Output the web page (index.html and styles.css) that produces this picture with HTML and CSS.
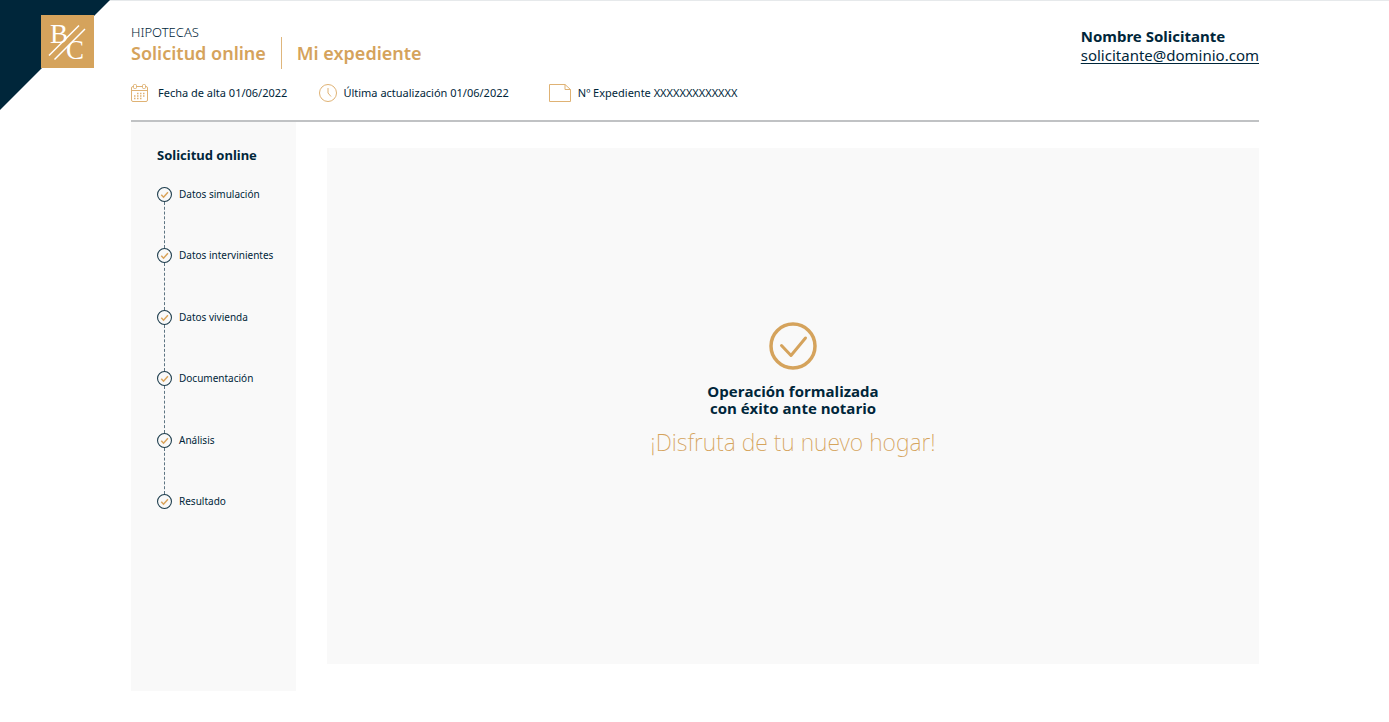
FILE: index.html
```html
<!DOCTYPE html>
<html lang="es">
<head>
<meta charset="utf-8">
<meta name="viewport" content="width=device-width, initial-scale=1">
<title>Mi expediente</title>
<link rel="stylesheet" href="styles.css">
</head>
<body>
<svg class="symbols" aria-hidden="true">
  <symbol id="check" viewBox="0 0 14 14">
    <circle cx="7" cy="7" r="6.5" fill="none" stroke="#1c3c4c"/>
    <path d="M4 7.3 6.1 9.5 10.2 4.9" fill="none" stroke="#d9a35b" stroke-width="1.4"/>
  </symbol>
</svg>
<div class="corner">
  <svg class="logo" viewBox="0 0 53 53" role="img" aria-label="B/C">
    <rect width="53" height="53" fill="#d5a35c"/>
    <text class="logo-letter" x="9" y="28">B</text>
    <text class="logo-letter" x="25" y="44">C</text>
    <path d="M11 42.500 42 12" stroke="#d5a35c" stroke-width="5"/>
    <path d="M8 40.500 38 10.500M13.500 44.500 44 14" stroke="#fff" stroke-width="1.500"/>
  </svg>
</div>
<div class="page">
  <header class="header">
    <div class="top">
      <div>
        <p class="section">HIPOTECAS</p>
        <div class="titles">
          <h1 class="title">Solicitud online</h1>
          <h2 class="title title-second">Mi expediente</h2>
        </div>
      </div>
      <div class="user">
        <p class="user-name">Nombre Solicitante</p>
        <a class="user-mail" href="mailto:solicitante@dominio.com">solicitante@dominio.com</a>
      </div>
    </div>
    <ul class="facts">
      <li class="fact fact-date">
        <svg width="17" height="18" viewBox="0 0 17 18" fill="none" stroke="#dfb274" aria-hidden="true">
          <path d="M2.500 2.500H2Q.5 2.500.5 4V16Q.5 17.500 2 17.500H15Q16.500 17.500 16.500 16V4Q16.500 2.500 15 2.500H14.500M5.500 2.500H11.500M.5 6.500H16.500"/>
          <rect x="2.500" y=".5" width="3" height="4" rx="1"/>
          <rect x="11.500" y=".5" width="3" height="4" rx="1"/>
          <path d="M6 9.500H15M3 12H15M3 14.500H12" stroke-width="1.500" stroke-dasharray="1.500 1.500"/>
        </svg>
        Fecha de alta 01/06/2022
      </li>
      <li class="fact fact-update">
        <svg width="18" height="18" viewBox="0 0 18 18" fill="none" stroke="#dfb274" aria-hidden="true">
          <circle cx="9" cy="9" r="8.500"/>
          <path d="M9 4V9L12 12.500"/>
        </svg>
        Última actualización 01/06/2022
      </li>
      <li class="fact fact-file">
        <svg width="22" height="18" viewBox="0 0 22 18" fill="none" stroke="#dfb274" aria-hidden="true">
          <path d="M.5.5H16L21.500 5.500V17.500H.5ZM16 .5V5.500H21.500"/>
        </svg>
        Nº Expediente XXXXXXXXXXXXX
      </li>
    </ul>
  </header>
  <div class="body">
    <nav class="sidebar" aria-labelledby="steps-title">
      <h2 class="steps-title" id="steps-title">Solicitud online</h2>
      <ol class="steps">
        <li class="step"><span class="rail"><svg class="mark"><use href="#check"/></svg></span>Datos simulación</li>
        <li class="step"><span class="rail"><svg class="mark"><use href="#check"/></svg></span>Datos intervinientes</li>
        <li class="step"><span class="rail"><svg class="mark"><use href="#check"/></svg></span>Datos vivienda</li>
        <li class="step"><span class="rail"><svg class="mark"><use href="#check"/></svg></span>Documentación</li>
        <li class="step"><span class="rail"><svg class="mark"><use href="#check"/></svg></span>Análisis</li>
        <li class="step"><span class="rail"><svg class="mark"><use href="#check"/></svg></span>Resultado</li>
      </ol>
    </nav>
    <main class="panel">
      <svg width="48" height="48" viewBox="0 0 48 48" fill="none" stroke="#d5a35c" aria-hidden="true">
        <circle cx="24" cy="24" r="22" stroke-width="3.500"/>
        <path d="M12.500 23.500 22 33.500 36.500 16" stroke-width="3" stroke-linecap="round" stroke-linejoin="round"/>
      </svg>
      <p class="message">Operación formalizada<br>con éxito ante notario</p>
      <p class="wish">¡Disfruta de tu nuevo hogar!</p>
    </main>
  </div>
</div>
</body>
</html>
```
FILE: styles.css
```css
* { box-sizing: border-box; margin: 0; padding: 0; }

body {
  background: #fff;
  color: #00263a;
  font-family: "Noto Sans", "Open Sans", sans-serif;
}

ul, ol { list-style: none; }
.symbols { position: absolute; width: 0; height: 0; }

.corner {
  position: absolute;
  top: 0;
  left: 0;
  padding: 15px 0 0 41px;
  width: 110px;
  height: 110px;
  background: #00263a;
  clip-path: polygon(0 0, 100% 0, 94px 16px, 94px 68px, 42px 68px, 0 100%);
}
.logo { display: block; width: 53px; height: 53px; }
.logo-letter { font-family: "Liberation Serif", serif; font-size: 27px; fill: #fff; }

.page {
  min-height: 100vh;
  padding: 0 130px 30px 131px;
  border-top: 1px solid #e6e9eb;
}
.header { border-bottom: 2px solid #c0c2c4; padding-bottom: 17px; }
.top { display: flex; justify-content: space-between; padding-top: 22px; }
.section { font-size: 13px; line-height: 18px; font-weight: 300; }
.titles { display: flex; align-items: center; margin-top: -4px; }
.title { color: #d5a35c; font-size: 18px; line-height: 32px; font-weight: 600; }
.title-second { margin-left: 15px; padding-left: 15px; border-left: 1px solid #dfb67c; }

.user { padding-top: 4px; font-size: 15px; line-height: 19px; }
.user-name { font-weight: 700; }
.user-mail { color: inherit; text-underline-offset: 2px; }

.facts { display: flex; margin-top: 14px; font-size: 11px; line-height: 20px; }
.fact { display: flex; align-items: center; }
.fact-date { gap: 10px; margin-right: 32px; }
.fact-update { gap: 6px; margin-right: 40px; }
.fact-file { gap: 7px; }

.body { display: flex; align-items: flex-start; gap: 31px; }
.sidebar {
  flex: 0 0 165px;
  min-height: 569px;
  padding: 23px 0 0 26px;
  background: #f9f9f9;
}
.steps-title { font-size: 13px; line-height: 20px; font-weight: 700; }
.steps { display: flex; flex-direction: column; height: 322px; margin-top: 22px; }
.step {
  flex: 1;
  display: flex;
  gap: 7px;
  font-size: 10px;
  line-height: 14px;
}
.step:last-child { flex: 0 0 14px; }
.rail { display: flex; flex-direction: column; align-items: center; width: 15px; }
.mark { flex: none; width: 15px; height: 15px; }
.step:not(:last-child) .rail::after { content: ""; flex: 1; border-left: 1px dashed #5d7482; }

.panel {
  flex: 1;
  display: flex;
  flex-direction: column;
  align-items: center;
  justify-content: center;
  min-height: 516px;
  margin-top: 26px;
  padding-bottom: 32px;
  background: #f9f9f9;
  text-align: center;
}
.message { margin-top: 13px; font-family: "Open Sans", sans-serif; font-size: 15px; line-height: 17px; font-weight: 700; }
.wish { margin-top: 8px; color: #d5a35c; font-size: 23px; line-height: 34px; font-weight: 200; }
```
